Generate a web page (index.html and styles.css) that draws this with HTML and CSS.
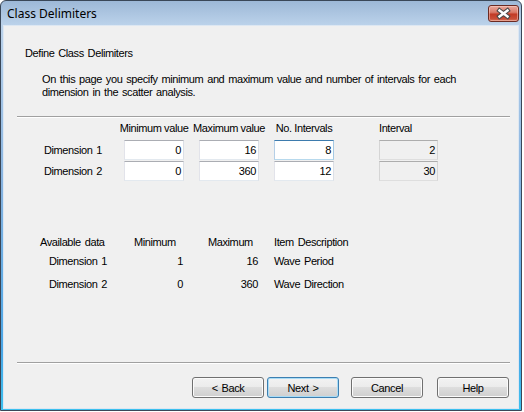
FILE: index.html
```html
<!DOCTYPE html>
<html>
<head>
<meta charset="utf-8">
<title>Class Delimiters</title>
<link rel="stylesheet" href="styles.css">
</head>
<body>
<div class="window">
  <div class="titlebar">
    <span class="title">Class Delimiters</span>
    <div class="close">
      <svg width="31" height="17" viewBox="0 0 31 17">
        <path d="M11.5 5.5 L19.5 11.5 M19.5 5.5 L11.5 11.5" stroke="#4a4a4a" stroke-width="4.6" stroke-linecap="square" fill="none"/>
        <path d="M11.5 5.5 L19.5 11.5 M19.5 5.5 L11.5 11.5" stroke="#ffffff" stroke-width="2.4" stroke-linecap="square" fill="none"/>
      </svg>
    </div>
  </div>
  <div class="client">
    <div class="heading">Define Class Delimiters</div>
    <p class="intro">On this page you specify minimum and maximum value and number of intervals for each<br>dimension in the scatter analysis.</p>
    <div class="sep sep-top"></div>
    <div class="delims">
      <div></div>
      <div class="colhead center"><span>Minimum value</span></div>
      <div class="colhead center"><span>Maximum value</span></div>
      <div class="colhead center"><span>No. Intervals</span></div>
      <div class="colhead">Interval</div>

      <div class="rowlabel">Dimension 1</div>
      <div class="field">0</div>
      <div class="field">16</div>
      <div class="field focused">8</div>
      <div class="field readonly">2</div>

      <div class="rowlabel">Dimension 2</div>
      <div class="field">0</div>
      <div class="field">360</div>
      <div class="field">12</div>
      <div class="field readonly">30</div>
    </div>

    <div class="avail">
      <div class="ahead">Available data</div>
      <div class="ahead">Minimum</div>
      <div class="ahead">Maximum</div>
      <div class="ahead">Item Description</div>

      <div class="alabel">Dimension 1</div>
      <div class="aval min">1</div>
      <div class="aval max">16</div>
      <div class="adesc">Wave Period</div>

      <div class="alabel">Dimension 2</div>
      <div class="aval min">0</div>
      <div class="aval max">360</div>
      <div class="adesc">Wave Direction</div>
    </div>

    <div class="sep sep-bottom"></div>
    <div class="buttons">
      <button class="btn back">&lt; Back</button>
      <button class="btn next default">Next &gt;</button>
      <button class="btn cancel">Cancel</button>
      <button class="btn help">Help</button>
    </div>
  </div>
</div>
</body>
</html>
```

FILE: styles.css
```css
html, body {
  margin: 0;
  padding: 0;
  background: #ffffff;
}

body {
  font-family: "Liberation Sans", Arial, sans-serif;
  font-size: 11px;
  color: #000;
}

.window {
  box-sizing: border-box;
  width: 522px;
  height: 411px;
  border: 1px solid #3a4758;
  border-radius: 6px 6px 0 0;
  padding: 0 2px 1px 2px;
  background: linear-gradient(#9db8d7 0px, #bbd2ea 24px, #86b3e0 45%, #4aa6e6 85%, #3cc0ee 100%);
  display: flex;
  flex-direction: column;
}

.titlebar {
  height: 24px;
  display: flex;
  justify-content: space-between;
  align-items: flex-start;
  padding-left: 4px;
}

.title {
  font-family: "Noto Sans", "Liberation Sans", sans-serif;
  font-size: 12px;
  line-height: 16px;
  margin-top: 5px;
  color: #000;
}

.close {
  box-sizing: border-box;
  width: 31px;
  height: 17px;
  margin-top: 4px;
  border: 1px solid #6b2a22;
  border-radius: 3px;
  background: linear-gradient(#eaa89c 0%, #d97a69 42%, #c23b26 55%, #c94e38 85%, #d8785f 100%);
  box-shadow: inset 0 0 0 1px rgba(255, 220, 210, 0.45);
  position: relative;
}

.close svg {
  position: absolute;
  left: -1px;
  top: -1px;
}

.client {
  flex: 1;
  background: #f0f0f0;
  border: 1px solid #dde7f2;
  display: flex;
  flex-direction: column;
  letter-spacing: -0.4px;
  word-spacing: 1.2px;
}

.heading {
  margin: 21px 0 0 21px;
  line-height: 13px;
}

.intro {
  margin: 13px 0 0 38px;
  line-height: 13px;
}

.sep {
  margin-left: 13px;
  width: 493px;
  height: 0;
  border-top: 1px solid #a0a0a0;
  border-bottom: 1px solid #ffffff;
}

.sep-top {
  margin-top: 17px;
}

.delims {
  margin: 4px 0 0 40px;
  display: grid;
  grid-template-columns: 65px 60px 60px 90px 59px;
  grid-template-rows: 17px 20px 20px;
  column-gap: 15px;
  row-gap: 1px;
}

.colhead {
  line-height: 13px;
  white-space: nowrap;
  word-spacing: 0;
}

.colhead.center {
  width: 60px;
  display: flex;
  justify-content: center;
}

.rowlabel {
  align-self: center;
  line-height: 13px;
  white-space: nowrap;
}

.field {
  box-sizing: border-box;
  width: 60px;
  height: 20px;
  background: #ffffff;
  border: 1px solid;
  border-color: #abadb3 #dbdfe6 #e3e9ef #e2e3ea;
  text-align: right;
  padding-right: 2px;
  line-height: 18px;
}

.field.focused {
  border-color: #3d7bad #a4c9e3 #b7d9ed #b5cfe7;
}

.field.readonly {
  width: 59px;
  background: #f0f0f0;
  border-color: #adadad #d5d5d5 #dedede #d5d5d5;
}

.avail {
  margin: 55px 0 0 36px;
  display: grid;
  grid-template-columns: 94px 74px 66px auto;
  grid-template-rows: 19px 23px 13px;
  line-height: 13px;
  white-space: nowrap;
}

.alabel {
  padding-left: 9px;
}

.aval {
  text-align: right;
}

.aval.min {
  padding-right: 25px;
}

.aval.max {
  padding-right: 16px;
}

.sep-bottom {
  margin-top: 71px;
}

.buttons {
  margin: 13px 0 0 13px;
  width: 492px;
  display: flex;
  justify-content: flex-end;
}

.btn {
  box-sizing: border-box;
  width: 72px;
  height: 21px;
  margin: 0;
  padding: 0;
  font-family: "Liberation Sans", Arial, sans-serif;
  font-size: 11px;
  letter-spacing: -0.4px;
  word-spacing: 1.2px;
  color: #000;
  border: 1px solid #707070;
  border-radius: 3px;
  background: linear-gradient(#f2f2f2 0%, #ebebeb 50%, #dddddd 50%, #cfcfcf 100%);
  box-shadow: inset 0 0 0 1px #fbfbfb;
}

.btn.default {
  border-color: #3c7fb1;
  box-shadow: inset 0 0 0 1px #a9dcf6;
}

.next {
  margin-left: 3px;
}

.cancel {
  margin-left: 12px;
}

.help {
  margin-left: 14px;
}
```
